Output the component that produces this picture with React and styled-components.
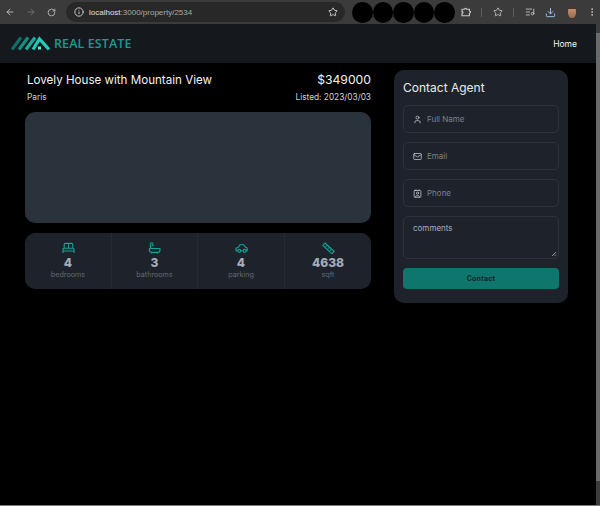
import React from "react";
import styled, { createGlobalStyle } from "styled-components";
import { ArrowLeft, ArrowRight, RotateCw, Info, Star, ListMusic, Download, MoreVertical, User, Mail, Contact } from "lucide-react";

const Global = createGlobalStyle`
  html, body { margin: 0; padding: 0; background: #000; height: 100%; overflow: hidden; }
  body { font-family: Inter, "Liberation Sans", sans-serif; }
  * { box-sizing: border-box; }
`;
const Page = styled.div`width: 600px; height: 506px; display: flex; flex-direction: column; background: #000;`;
const Chrome = styled.header`
  height: 24px; flex: none; background: #3b3b3b; display: flex; align-items: center; padding: 0 0 0 5px; color: #c9c9c9;
`;
const NavIcons = styled.div`display: flex; align-items: center; gap: 11px; width: 61px; flex: none;`;
const Omnibox = styled.div`
  width: 279px; height: 20px; flex: none; border-radius: 10px; background: #282828; display: flex; align-items: center; padding: 0 7px 0 8px; gap: 5px;
  font: 8px "Liberation Sans", Arial, sans-serif; color: #a8a8a8;
`;
const Host = styled.span`color: #e0e0e0;`;
const Url = styled.span`flex: 1;`;
const Blobs = styled.div`display: flex; margin-left: 7px; flex: none;`;
const Blob = styled.span`width: 20.5px; height: 21px; border-radius: 50%; background: #000; display: block; flex: none;`;
const Tools = styled.div`display: flex; align-items: center; flex: 1; padding-left: 6px; gap: 10.5px;`;
const Sep = styled.span`width: 1px; height: 9px; background: #5c5c5c; display: block; flex: none;`;
const Avatar = styled.span`width: 8px; height: 12px; border-radius: 45%; background: linear-gradient(#4a3629 22%, #c49272 22%, #9a6a4c); display: block; flex: none; margin: 0 1px 0 1px;`;

const Viewport = styled.div`flex: 1; display: flex; min-height: 0;`;
const Site = styled.div`flex: 1; min-width: 0; display: flex; flex-direction: column;`;
const Scrollbar = styled.div`width: 4px; flex: none; background: #3c3c3c; padding: 9px 0 24px; display: flex;`;
const Thumb = styled.div`flex: 1; background: #6a6a6a;`;
const BottomEdge = styled.div`height: 1px; flex: none; background: #7a7a7a;`;
const Nav = styled.nav`
  height: 39px; flex: none; background: #15191e; display: flex; align-items: center; justify-content: space-between; padding: 0 19px 0 11px;
`;
const Brand = styled.div`display: flex; align-items: center; gap: 4px;`;
const BrandName = styled.span`
  font: 600 12.5px "Open Sans", sans-serif; color: #149e90; letter-spacing: 0.1px;
`;
const NavLink = styled.a`font-size: 8.5px; font-weight: 400; color: #f2f2f2;`;
const Content = styled.main`display: flex; align-items: flex-start; padding: 7px 0 0 25px; gap: 23px;`;
const Left = styled.section`width: 346px; flex: none; display: flex; flex-direction: column;`;
const TitleRow = styled.div`display: flex; justify-content: space-between; align-items: center; padding: 1px 0 0 2px; height: 18px;`;
const Title = styled.h1`margin: 0; font-size: 11.6px; font-weight: 400; color: #f2f2f2;`;
const Price = styled.span`font-size: 12.2px; color: #f2f2f2;`;
const SubRow = styled.div`display: flex; justify-content: space-between; align-items: center; padding: 1px 0 0 2px; height: 16px;`;
const Small = styled.span`font-size: 8.3px; color: #d0d2d5;`;
const Gallery = styled.div`height: 111px; margin-top: 8px; border-radius: 10px; background: #2a323c;`;
const Stats = styled.div`height: 56px; margin-top: 10px; border-radius: 10px; background: #1e232b; display: grid; grid-template-columns: 86px 86px 87px 87px;`;
const Stat = styled.div`
  display: flex; flex-direction: column; align-items: center; padding-top: 9px; color: #0fa898;
  & + & { border-left: 1px solid #262b33; }
`;
const StatIcon = styled.svg`display: block; flex: none;`;
const StatValue = styled.div`font-size: 12px; line-height: 14px; font-weight: 800; color: #a6adbb; margin-top: 2px;`;
const StatLabel = styled.div`font-size: 7.2px; line-height: 10px; color: #626873;`;
const Card = styled.aside`
  width: 174px; height: 233px; flex: none; border-radius: 10px; background: #1e232b; padding: 10px 9px 0 9px; display: flex; flex-direction: column;
`;
const CardTitle = styled.h2`margin: 0 0 10px; font-size: 12px; line-height: 15px; font-weight: 400; color: #e8e9eb;`;
const Field = styled.label`
  height: 28px; margin-bottom: 9px; border: 1px solid #2d333b; border-radius: 5px; display: flex; align-items: center; gap: 5px; padding-left: 9px; color: #c5c9d0;
`;
const Hint = styled.span`font-size: 8px; color: #7b818b;`;
const Comments = styled.div`
  height: 43px; margin-bottom: 9px; border: 1px solid #2d333b; border-radius: 5px; padding: 6px 9px; font-size: 8px; line-height: 10px; color: #a6adbb; position: relative;
`;
const Grip = styled.svg`position: absolute; right: 1px; bottom: 1px;`;
const Submit = styled.button`
  height: 21px; border: 0; border-radius: 4px; background: #0f766e; color: #11262a; font: 700 7px Inter, sans-serif; letter-spacing: 0.2px; padding: 0;
`;

const Logo = () => (
  <svg width="39" height="15" viewBox="0 0 39 15">
    <g fill="none" strokeWidth="3.2">
      <path d="M1 13.5 L10 1.5" stroke="#0f6f66" />
      <path d="M8 13.5 L17 1.5" stroke="#12907f" />
      <path d="M15 13.5 L24 1.5" stroke="#18ad9a" />
      <path d="M22 13.5 L28.5 3 L38 13.5" stroke="#20ccb5" />
    </g>
    <rect x="27" y="10.5" width="3" height="3" fill="#5fe6d2" />
  </svg>
);

const Puzzleish = () => (
  <svg width="10" height="10" viewBox="0 0 10 10" fill="none" stroke="currentColor" strokeWidth="1.1">
    <path d="M1 2.2 H3.6 a1 1 0 0 1 2 0 H8.4 V4 a1 1 0 0 1 0 2.2 V8.8 H1 V6.4 a1 1 0 0 0 0-2 Z" />
  </svg>
);
const StatGlyphs = {
  bed: (
    <path d="M1 11 V7.2 a1 1 0 0 1 1-1 H11 a1 1 0 0 1 1 1 V11 M1 9 H12 M2.2 6.2 V2.6 a1.2 1.2 0 0 1 1.2-1.2 H9.6 a1.2 1.2 0 0 1 1.2 1.2 V6.2 M6.5 1.4 V6.2" />
  ),
  bath: (
    <path d="M2.4 6.5 V2 a1.2 1.2 0 0 1 2.4 0 V2.6 M3.6 3.2 H6 M1 6.5 H12 V8 a2.4 2.4 0 0 1-2.4 2.4 H3.8 a2.4 2.4 0 0 1-2.4-2.4 V6.5 M3.5 10.4 V11.5 M9.5 10.4 V11.5" />
  ),
  car: (
    <path d="M2.6 8.8 H1 V6.2 L3.4 5.2 L5 2.8 H8.8 L10.4 5.2 L12.2 6 V8.8 H11 M5.6 8.8 H8.2 M4.1 7.2 a1.5 1.5 0 1 0 0.01 0 Z M9.6 7.2 a1.5 1.5 0 1 0 0.01 0 Z" />
  ),
  ruler: (
    <path d="M0.8 3.4 L3 1 L12.2 9.4 L9.8 11.8 Z M4.6 3.6 L3.6 4.7 M6.8 5.6 L5.8 6.7 M9 7.6 L8 8.7" />
  ),
};

const fields = [
  { Icon: User, hint: "Full Name" },
  { Icon: Mail, hint: "Email" },
  { Icon: Contact, hint: "Phone" },
];
const stats = [
  { glyph: "bed", value: 4, label: "bedrooms" },
  { glyph: "bath", value: 3, label: "bathrooms" },
  { glyph: "car", value: 4, label: "parking" },
  { glyph: "ruler", value: 4638, label: "sqft" },
];

export default function App() {
  return (
    <Page>
      <Global />
      <Chrome>
        <NavIcons>
          <ArrowLeft size={10} />
          <ArrowRight size={10} color="#777" />
          <RotateCw size={9} />
        </NavIcons>
        <Omnibox>
          <Info size={10} color="#e0e0e0" />
          <Url><Host>localhost</Host>:3000/property/2534</Url>
          <Star size={10} color="#e0e0e0" />
        </Omnibox>
        <Blobs>{[0, 1, 2, 3, 4].map((i) => <Blob key={i} />)}</Blobs>
        <Tools>
          <Puzzleish />
          <Sep />
          <Star size={10} />
          <Sep />
          <ListMusic size={10} />
          <Download size={11} color="#a8c7fa" />
          <Avatar />
          <MoreVertical size={10} />
        </Tools>
      </Chrome>
      <Viewport>
        <Site>
          <Nav>
            <Brand><Logo /><BrandName>REAL ESTATE</BrandName></Brand>
            <NavLink>Home</NavLink>
          </Nav>
          <Content>
            <Left>
              <TitleRow><Title>Lovely House with Mountain View</Title><Price>$349000</Price></TitleRow>
              <SubRow><Small>Paris</Small><Small>Listed: 2023/03/03</Small></SubRow>
              <Gallery />
              <Stats>
                {stats.map(({ glyph, value, label }) => (
                  <Stat key={label}>
                    <StatIcon width="13" height="12" viewBox="0 0 13 12" fill="none" stroke="currentColor" strokeWidth="1.1" strokeLinejoin="round">
                      {StatGlyphs[glyph]}
                    </StatIcon>
                    <StatValue>{value}</StatValue>
                    <StatLabel>{label}</StatLabel>
                  </Stat>
                ))}
              </Stats>
            </Left>
            <Card>
              <CardTitle>Contact Agent</CardTitle>
              {fields.map(({ Icon, hint }) => (
                <Field key={hint}>
                  <Icon size={9} strokeWidth={2} />
                  <Hint>{hint}</Hint>
                </Field>
              ))}
              <Comments>
                comments
                <Grip width="6" height="6" viewBox="0 0 6 6"><path d="M1 5 L5 1 M3.5 5 L5 3.5" stroke="#a6adbb" strokeWidth="0.8" /></Grip>
              </Comments>
              <Submit>Contact</Submit>
            </Card>
          </Content>
        </Site>
        <Scrollbar><Thumb /></Scrollbar>
      </Viewport>
      <BottomEdge />
    </Page>
  );
}
